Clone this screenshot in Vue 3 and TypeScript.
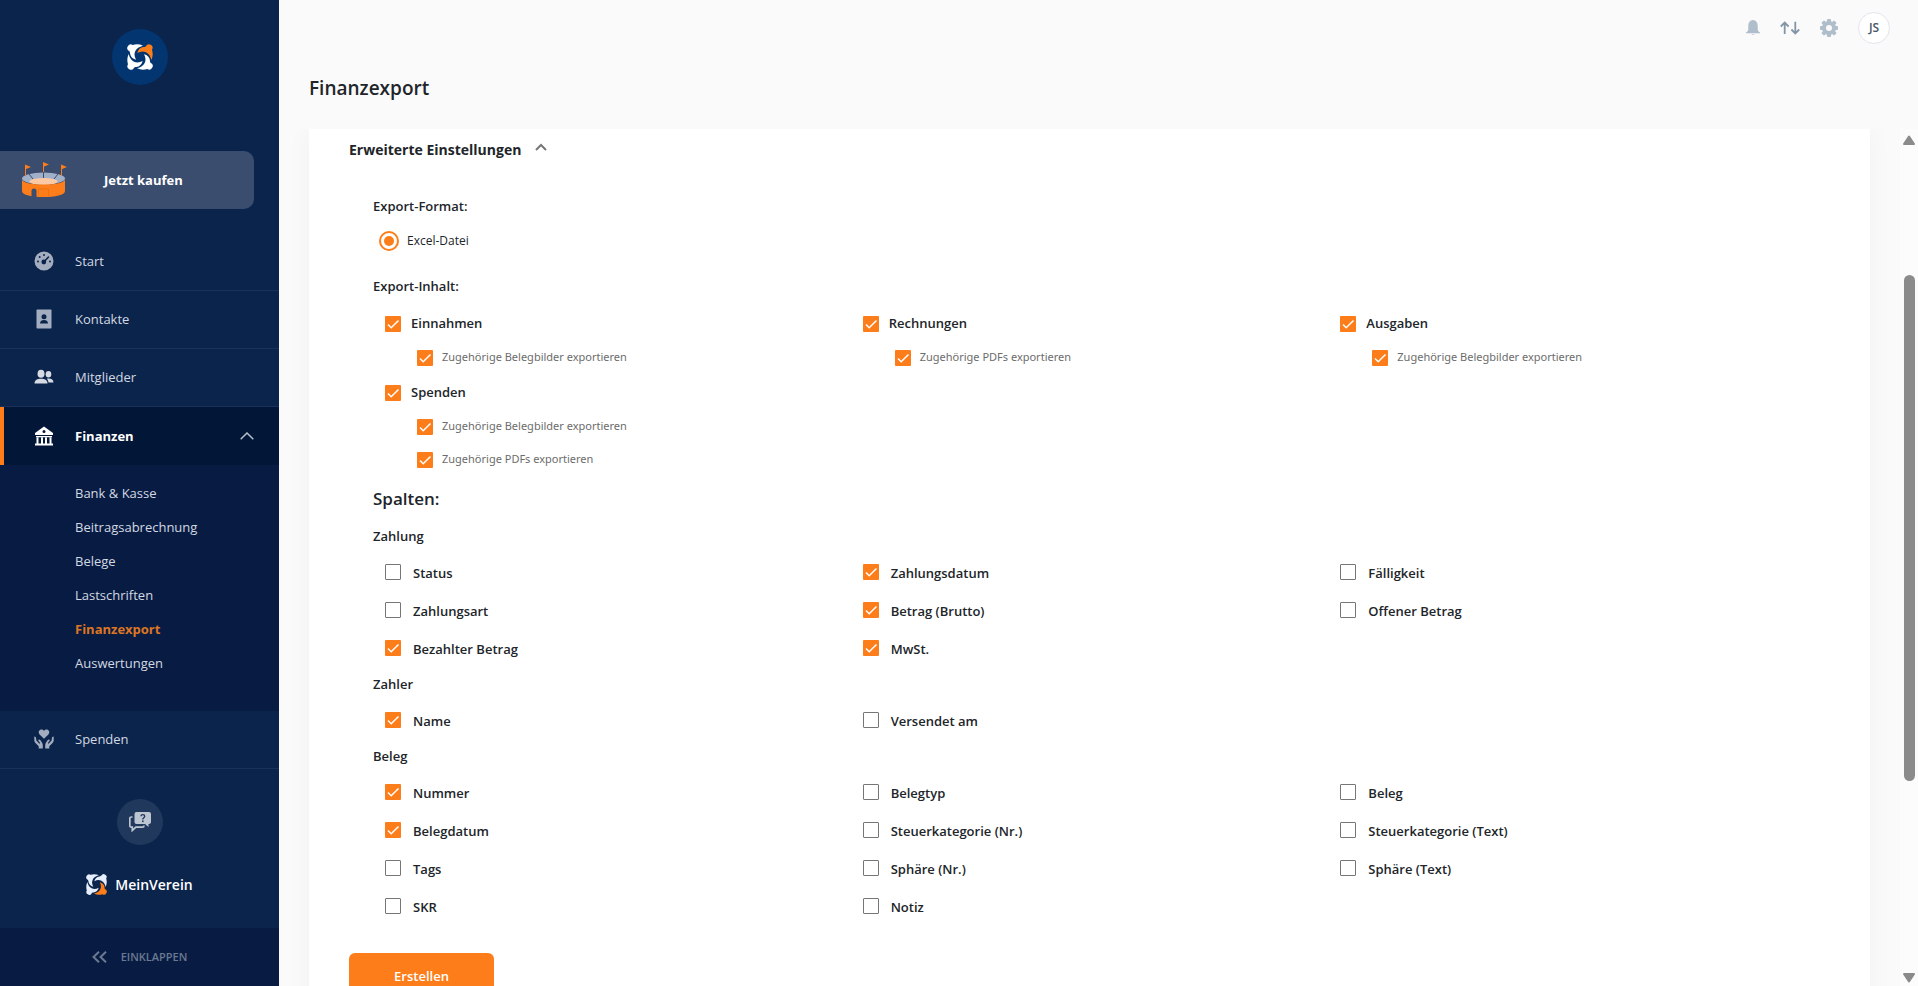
<script setup lang="ts">
import { ref } from 'vue'

interface Option {
  label: string
  checked: boolean
}

interface ContentGroup extends Option {
  children: Option[]
}

interface ColumnSection {
  title: string
  options: Option[]
}

const submenu: string[] = [
  'Bank & Kasse',
  'Beitragsabrechnung',
  'Belege',
  'Lastschriften',
  'Finanzexport',
  'Auswertungen',
]
const activeEntry = 'Finanzexport'

const on = (label: string): Option => ({ label, checked: true })
const off = (label: string): Option => ({ label, checked: false })

const format = ref('excel')

const contents = ref<ContentGroup[]>([
  { ...on('Einnahmen'), children: [on('Zugehörige Belegbilder exportieren')] },
  { ...on('Rechnungen'), children: [on('Zugehörige PDFs exportieren')] },
  { ...on('Ausgaben'), children: [on('Zugehörige Belegbilder exportieren')] },
  {
    ...on('Spenden'),
    children: [on('Zugehörige Belegbilder exportieren'), on('Zugehörige PDFs exportieren')],
  },
])

const sections = ref<ColumnSection[]>([
  {
    title: 'Zahlung',
    options: [
      off('Status'),
      on('Zahlungsdatum'),
      off('Fälligkeit'),
      off('Zahlungsart'),
      on('Betrag (Brutto)'),
      off('Offener Betrag'),
      on('Bezahlter Betrag'),
      on('MwSt.'),
    ],
  },
  { title: 'Zahler', options: [on('Name'), off('Versendet am')] },
  {
    title: 'Beleg',
    options: [
      on('Nummer'),
      off('Belegtyp'),
      off('Beleg'),
      on('Belegdatum'),
      off('Steuerkategorie (Nr.)'),
      off('Steuerkategorie (Text)'),
      off('Tags'),
      off('Sphäre (Nr.)'),
      off('Sphäre (Text)'),
      off('SKR'),
      off('Notiz'),
    ],
  },
])

const figure =
  'M-8-12C-6-22 1-29 11-30C15-30 17-31 18-33A9 9 0 1 1 36-22C39-12 39-2 34 9C31-3 26-10 18-14C10-18 1-17-8-12Z'
</script>

<template>
  <div class="shell">
    <aside class="sidebar">
      <a class="club" href="#" aria-label="Verein">
        <svg viewBox="-39 -39 78 78" width="26" height="26" aria-hidden="true">
          <path :d="figure" fill="#fc7d19" />
          <g fill="#fff">
            <path :d="figure" transform="rotate(90)" />
            <path :d="figure" transform="rotate(180)" />
            <path :d="figure" transform="rotate(270)" />
          </g>
        </svg>
      </a>

      <button class="buy" type="button">
        <svg viewBox="0 0 46 36" width="46" height="36" aria-hidden="true">
          <ellipse cx="21.500" cy="16.500" rx="21.500" ry="6" fill="#a0b0c9" />
          <path d="M7 12l4 5M21.500 10v6M36 12l-4 5" stroke="#3a4d6f" fill="none" />
          <ellipse cx="21.500" cy="19.500" rx="14" ry="3.500" fill="#fcc9a4" />
          <path d="M0 17c0 4 10 5.500 21.500 5.500S43 21 43 17v12c0 4-10 6-21.500 6S0 33 0 29z" fill="#fc7d19" />
          <path d="M9.500 35v-6a2.500 2.500 0 0 1 5 0v6z" fill="#3a4d6f" />
          <path d="M16.500 34v-7h10v7" fill="none" stroke="#e56f12" stroke-width=".7" />
          <path d="M3.500 14V3M21.500 10V1M39.500 14V3" stroke="#fc7d19" />
          <path d="M3 2.500L9 5 3 7.500zM21 0l6 2.500L21 5zM39 2.500L45 5l-6 2.500z" fill="#fc7d19" />
        </svg>
        <span>Jetzt kaufen</span>
      </button>

      <nav aria-label="Hauptmenü">
        <a class="item" href="#">
          <svg viewBox="0 0 20 20" width="20" height="20" aria-hidden="true">
            <circle cx="10" cy="10" r="9.500" fill="currentColor" />
            <g fill="#0b244c">
              <circle cx="4" cy="10.500" r="1" /><circle cx="5.700" cy="6" r="1" />
              <circle cx="10" cy="4" r="1" /><circle cx="16" cy="10.500" r="1" />
              <circle cx="9.800" cy="11" r="2.400" />
            </g>
            <path d="M9.800 11l4.700-5" stroke="#0b244c" stroke-width="1.600" stroke-linecap="round" />
          </svg>
          <span>Start</span>
        </a>
        <a class="item" href="#">
          <svg viewBox="0 0 20 20" width="20" height="20" aria-hidden="true">
            <rect x="2.500" y=".5" width="15" height="19" rx=".8" fill="currentColor" />
            <circle cx="10" cy="7.700" r="2.500" fill="#0b244c" />
            <path d="M6 14.500c0-2.500 1.800-3.600 4-3.600s4 1.100 4 3.600z" fill="#0b244c" />
          </svg>
          <span>Kontakte</span>
        </a>
        <a class="item bright" href="#">
          <svg viewBox="0 0 20 20" width="20" height="20" aria-hidden="true">
            <g fill="currentColor">
              <ellipse cx="7" cy="6.700" rx="3.500" ry="4" />
              <path d="M.5 16.500c0-3.500 3-4.700 6.500-4.700s6.500 1.200 6.500 4.700z" />
              <ellipse cx="14.500" cy="7.300" rx="2.800" ry="3.300" />
              <path d="M12.800 11.700c3.500-.9 6.700.6 6.700 3.800h-5c-.2-1.600-.7-2.700-1.700-3.800z" />
            </g>
          </svg>
          <span>Mitglieder</span>
        </a>
        <button class="item active" type="button" aria-expanded="true">
          <svg viewBox="0 0 20 20" width="20" height="20" aria-hidden="true">
            <path
              fill="currentColor"
              fill-rule="evenodd"
              d="M10 .5L19 7v2H1V7zM10 4a1.500 1.500 0 1 0 0 3 1.500 1.500 0 0 0 0-3zM2 10h16v1.300H2zM2.500 11h2v6.500h-2zM7 11h2v6.500H7zM11 11h2v6.500h-2zM15.500 11h2v6.500h-2zM1 17.500h18v2H1z"
            />
          </svg>
          <span>Finanzen</span>
          <svg class="chevron" viewBox="0 0 14 8" width="14" height="8" aria-hidden="true">
            <path d="M.7 7.300L7 1l6.300 6.300" fill="none" stroke="#b5bdca" stroke-width="1.500" />
          </svg>
        </button>
        <ul class="submenu">
          <li v-for="entry in submenu" :key="entry">
            <a href="#" :class="{ current: entry === activeEntry }">{{ entry }}</a>
          </li>
        </ul>
        <a class="item" href="#">
          <svg viewBox="0 0 20 20" width="20" height="20" aria-hidden="true">
            <g fill="currentColor">
              <path d="M10 9.800L5.600 5.500C3.600 3 5.300.5 7.500.5c1.200 0 2 .6 2.500 1.400C10.500 1.100 11.300.5 12.500.5c2.200 0 3.900 2.500 1.900 5z" />
              <path d="M.3 7.600c1.300 0 1.700.7 1.800 1.800l.3 2.200 3 3.200.8-.7-2-2.700c.2-1 1.300-1.200 2-.3 1.600 2 2.600 3.300 2.600 5.300v3.100H4.700v-2.300L1.500 14C.6 13 .3 12.200.3 10.800z" />
              <path d="M19.700 7.600c-1.300 0-1.700.7-1.800 1.800l-.3 2.200-3 3.200-.8-.7 2-2.700c-.2-1-1.300-1.200-2-.3-1.600 2-2.600 3.300-2.600 5.300v3.100h4.100v-2.300l3.200-3.200c.9-1 1.200-1.800 1.200-3.200z" />
            </g>
          </svg>
          <span>Spenden</span>
        </a>
      </nav>

      <button class="help" type="button" aria-label="Hilfe">
        <svg viewBox="0 0 22 20" width="22" height="20" aria-hidden="true">
          <path d="M3.500 5H2.300C1.300 5 .8 5.500.8 6.500v7.200c0 1 .5 1.500 1.500 1.500h1v3.300l3.500-3.300h6.500c1 0 1.700-.5 1.700-1.500v-.3" fill="none" stroke="#bcc4d2" stroke-width="1.700" />
          <path d="M7.500 0H20a2 2 0 0 1 2 2v8a2 2 0 0 1-2 2h-.5v3L16 12H7.500a2 2 0 0 1-2-2V2a2 2 0 0 1 2-2z" fill="#bcc4d2" />
          <path d="M12 4.300c0-2.200 3.700-2.200 3.700 0 0 1.500-1.900 1.400-1.900 3.200" fill="none" stroke="#20385c" stroke-width="1.400" />
          <rect x="13" y="8.500" width="1.600" height="1.600" fill="#20385c" />
        </svg>
      </button>

      <div class="brand">
        <svg viewBox="-39 -39 78 78" width="21" height="21" aria-hidden="true">
          <g fill="#e6eefb">
            <path :d="figure" />
            <path :d="figure" transform="rotate(180)" />
            <path :d="figure" transform="rotate(270)" />
          </g>
          <path :d="figure" transform="rotate(90)" fill="#fc7d19" />
        </svg>
        <span>MeinVerein</span>
      </div>

      <button class="collapse" type="button">
        <svg viewBox="0 0 15 12" width="15" height="12" aria-hidden="true">
          <path d="M7 .7L1.500 6 7 11.300M14 .7L8.500 6l5.500 5.300" fill="none" stroke="currentColor" stroke-width="2" />
        </svg>
        <span>EINKLAPPEN</span>
      </button>
    </aside>

    <main class="main">
      <header class="topbar">
        <button type="button" aria-label="Benachrichtigungen">
          <svg viewBox="0 0 14 16" width="14" height="16" aria-hidden="true">
            <path d="M7 0C10 .4 11.700 2.500 11.700 5.500V9c0 1.500.7 2.500 2.300 3.500v.8H0v-.8C1.600 11.500 2.300 10.500 2.300 9V5.500C2.300 2.500 4 .4 7 0zM5.500 14h3c-.5 1-2.500 1-3 0z" fill="#b0bdca" />
          </svg>
        </button>
        <button type="button" aria-label="Übertragungen">
          <svg viewBox="0 0 20 14" width="20" height="14" aria-hidden="true">
            <path d="M4.700 13V2M.8 5.500l3.900-4 3.900 4M15.300.8V12M11.400 8.500l3.900 4 3.900-4" fill="none" stroke="#8494a8" stroke-width="1.800" />
          </svg>
        </button>
        <button type="button" aria-label="Einstellungen">
          <svg viewBox="-9 -9 18 18" width="18" height="18" aria-hidden="true">
            <g fill="#b0bdca">
              <rect v-for="n in 4" :key="n" x="-2" y="-9" width="4" height="18" rx="1" :transform="`rotate(${n * 45})`" />
              <circle r="7" />
            </g>
            <circle r="3" fill="#fafafa" />
          </svg>
        </button>
        <button class="avatar" type="button">JS</button>
      </header>

      <h1>Finanzexport</h1>

      <div class="viewport">
        <div class="scroller">
          <form class="card" @submit.prevent>
            <button class="toggle" type="button" aria-expanded="true">
              <span>Erweiterte Einstellungen</span>
              <svg viewBox="0 0 12 8" width="12" height="8" aria-hidden="true">
                <path d="M1 7l5-5 5 5" fill="none" stroke="#777" stroke-width="2" />
              </svg>
            </button>

            <div class="settings">
              <h2>Export-Format:</h2>
              <label class="format">
                <input v-model="format" type="radio" name="format" value="excel" />
                <span>Excel-Datei</span>
              </label>

              <h2>Export-Inhalt:</h2>
              <div class="grid contents">
                <div v-for="group in contents" :key="group.label">
                  <label class="group">
                    <input v-model="group.checked" type="checkbox" />
                    <span>{{ group.label }}</span>
                  </label>
                  <label v-for="child in group.children" :key="child.label" class="child">
                    <input v-model="child.checked" type="checkbox" />
                    <span>{{ child.label }}</span>
                  </label>
                </div>
              </div>

              <h2 class="columns-title">Spalten:</h2>
              <section v-for="section in sections" :key="section.title">
                <h3>{{ section.title }}</h3>
                <div class="grid">
                  <label v-for="option in section.options" :key="option.label" class="option">
                    <input v-model="option.checked" type="checkbox" />
                    <span>{{ option.label }}</span>
                  </label>
                </div>
              </section>
            </div>

            <button class="submit" type="submit">Erstellen</button>
          </form>
        </div>
        <div class="scrollbar" aria-hidden="true">
          <svg viewBox="0 0 14 11" width="14" height="11">
            <path d="M7 1.500l5 7.500H2z" fill="#8b8b8b" stroke="#8b8b8b" stroke-width="2" stroke-linejoin="round" />
          </svg>
          <div class="track"><div class="thumb"></div></div>
          <svg viewBox="0 0 14 11" width="14" height="11">
            <path d="M7 9.500L2 2h10z" fill="#8b8b8b" stroke="#8b8b8b" stroke-width="2" stroke-linejoin="round" />
          </svg>
        </div>
      </div>
    </main>
  </div>
</template>

<style>
body {
  margin: 0;
}
</style>

<style scoped>
.shell {
  display: flex;
  height: 100vh;
  overflow: hidden;
  background: #fafafa;
  color: #212529;
  font-family: 'Segoe UI', 'Open Sans', 'Noto Sans', sans-serif;
  font-size: 13px;
  line-height: 20px;
}

* {
  box-sizing: border-box;
}

button {
  border: 0;
  padding: 0;
  background: none;
  color: inherit;
  font: inherit;
  cursor: pointer;
}

a {
  color: inherit;
  text-decoration: none;
}

svg {
  display: block;
  flex: none;
}

/* Sidebar */
.sidebar {
  display: flex;
  flex-direction: column;
  flex: none;
  width: 279px;
  background: #0b244c;
  color: #d3d8e1;
}

.club {
  display: grid;
  place-items: center;
  align-self: center;
  width: 56px;
  height: 56px;
  margin-top: 29px;
  border-radius: 50%;
  background: #033570;
}

.buy {
  display: flex;
  align-items: center;
  gap: 36px;
  width: 254px;
  height: 58px;
  margin: 66px 0 24px;
  padding-left: 22px;
  border-radius: 0 10px 10px 0;
  background: #3a4d6f;
  color: #fff;
  font-weight: 700;
}

.item {
  display: flex;
  align-items: center;
  gap: 21px;
  width: 100%;
  height: 58px;
  padding: 0 25px 1px 34px;
  border-bottom: 1px solid #1a3259;
}

.item svg {
  color: #a3adbf;
}

.item.bright svg {
  color: #d6dbe3;
}

.item.active {
  padding-left: 30px;
  border-left: 4px solid #fc7d19;
  border-bottom: 0;
  background: #021637;
  color: #fff;
  font-weight: 700;
}

.item.active svg {
  color: #fff;
}

.chevron {
  margin-left: auto;
}

.submenu {
  margin: 0;
  padding: 11px 0 31px 75px;
  background: #081c43;
  list-style: none;
}

.submenu a {
  display: block;
  line-height: 34px;
}

.submenu .current {
  color: #dc7524;
  font-weight: 700;
}

.help {
  display: grid;
  place-items: center;
  align-self: center;
  width: 46px;
  height: 46px;
  margin-top: 30px;
  border-radius: 50%;
  background: #20385c;
}

.brand {
  display: flex;
  align-items: center;
  justify-content: center;
  gap: 8px;
  margin-top: 29px;
  color: #fff;
  font-size: 14px;
  font-weight: 600;
}

.collapse {
  display: flex;
  align-items: center;
  justify-content: center;
  gap: 14px;
  height: 58px;
  margin-top: auto;
  background: #081c43;
  color: #6b7891;
  font-size: 11px;
  font-weight: 600;
}

/* Main area */
.main {
  display: flex;
  flex: 1;
  flex-direction: column;
  min-width: 0;
}

.topbar {
  display: flex;
  align-items: center;
  justify-content: flex-end;
  gap: 20px;
  height: 56px;
  padding-right: 28px;
}

.avatar {
  width: 32px;
  height: 32px;
  border: 1px solid #e4e4ee;
  border-radius: 50%;
  background: #fff;
  color: #4a5568;
  font-size: 12px;
  font-weight: 600;
}

h1 {
  margin: 18px 0 27px 30px;
  font-size: 19px;
  font-weight: 600;
  line-height: 28px;
}

.viewport {
  display: flex;
  flex: 1;
  min-height: 0;
}

.scroller {
  flex: 1;
  overflow: hidden;
  padding: 0 30px;
}

.card {
  padding: 9px 40px 40px;
  background: #fff;
  box-shadow: 0 0 24px rgba(0, 0, 0, 0.04);
}

.toggle {
  display: flex;
  gap: 14px;
  height: 24px;
  font-size: 14px;
  font-weight: 700;
  line-height: 24px;
}

.toggle svg {
  margin-top: 5px;
}

.settings {
  padding: 34px 24px 0;
}

h2,
h3 {
  margin: 0;
  font-size: 13px;
  font-weight: 600;
  line-height: 20px;
}

.format {
  display: flex;
  align-items: center;
  gap: 8px;
  width: max-content;
  height: 20px;
  margin: 15px 0 25px;
  padding-left: 6px;
  font-size: 12px;
}

.grid {
  display: grid;
  grid-template-columns: repeat(3, 1fr);
}

.contents {
  row-gap: 2px;
  margin: 11px 0 9px;
}

.group,
.child,
.option {
  display: flex;
  align-items: center;
}

.group {
  gap: 10px;
  height: 34px;
  padding-left: 12px;
  font-weight: 600;
}

.child {
  gap: 9px;
  height: 33px;
  padding-left: 44px;
  color: #6c6c6c;
  font-family: 'Segoe UI', 'Noto Sans', sans-serif;
  font-size: 11px;
}

.group span,
.child span {
  padding-bottom: 2px;
}

.option {
  gap: 12px;
  height: 38px;
  padding-left: 12px;
  font-weight: 600;
}

.option span {
  padding-top: 2px;
}

.columns-title {
  margin-bottom: 13px;
  font-size: 17px;
  line-height: 28px;
}

section h3 {
  margin-bottom: 7px;
}

section + section h3 {
  padding-top: 7px;
}

input {
  flex: none;
  appearance: none;
  margin: 0;
  background: #fff;
}

input[type='checkbox'] {
  width: 16px;
  height: 16px;
  border: 1px solid #767676;
  border-radius: 1px;
}

input[type='checkbox']:checked {
  border: 0;
  background: #fc7d19
    url("data:image/svg+xml,%3Csvg xmlns='http://www.w3.org/2000/svg' viewBox='0 0 16 16'%3E%3Cpath d='M3 8.500l3.200 3.200L13.500 4.500' fill='none' stroke='white' stroke-width='1.500'/%3E%3C/svg%3E");
}

input[type='radio'] {
  width: 20px;
  height: 20px;
  border: 2px solid #fc7d19;
  border-radius: 50%;
}

input[type='radio']:checked {
  padding: 3px;
  background: #fc7d19 content-box;
}

.submit {
  width: 145px;
  height: 46px;
  margin-top: 28px;
  border-radius: 6px;
  background: #fc7d19;
  color: #fff;
  font-weight: 600;
}

/* Scrollbar */
.scrollbar {
  display: flex;
  flex: none;
  flex-direction: column;
  align-items: center;
  width: 18px;
  padding: 6px 0 3px;
  background: #fcfcfc;
}

.track {
  display: flex;
  flex: 1;
  padding: 129px 0 191px;
}

.thumb {
  width: 11px;
  border-radius: 6px;
  background: #8b8b8b;
}
</style>
